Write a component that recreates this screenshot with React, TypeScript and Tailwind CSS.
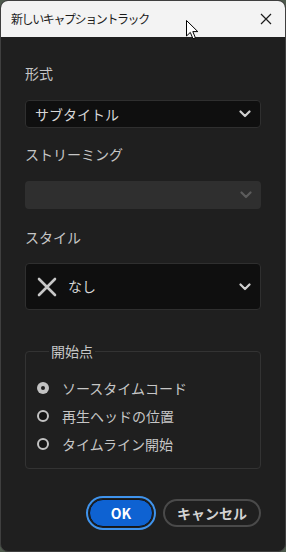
import React from "react";

const font = { fontFamily: '"Noto Sans CJK JP", "Noto Sans", sans-serif' };

export default function App() {
  return (
    <div className="h-[552px] w-[286px] bg-[#4e5a4d]" style={font}>
      <div className="relative flex h-full flex-col overflow-hidden rounded-lg border border-[#3f3f3f] bg-[#1f1f1f]">
        {/* Title bar */}
        <div className="flex h-[36px] shrink-0 items-center justify-between bg-[#f3f3f3] pl-[10px] pr-[13px]">
          <span className="text-[12px] leading-none tracking-[-1.4px] text-[#1b1b1b]">新しいキャプショントラック</span>
          <svg width="12" height="12" viewBox="0 0 12 12" className="text-[#1b1b1b]">
            <path d="M1 1 L11 11 M11 1 L1 11" stroke="currentColor" strokeWidth="1.2" />
          </svg>
        </div>

        {/* Body */}
        <div className="flex flex-col px-[24px]">
          <Label className="mt-[26px]">形式</Label>
          <div className="mt-[17px] flex h-[28px] items-center justify-between rounded-[4px] border border-[#2f2f2f] bg-[#0f0f0f] pl-[9px] pr-[9px]">
            <span className="text-[14px] text-[#d6d6d6]">サブタイトル</span>
            <Chevron color="#d0d0d0" />
          </div>

          <Label className="mt-4">ストリーミング</Label>
          <div className="mt-[17px] flex h-[28px] items-center justify-end rounded-[4px] bg-[#2f2f2f] pr-[9px]">
            <Chevron color="#5c5c5c" />
          </div>

          <Label className="mt-[18px]">スタイル</Label>
          <div className="mt-4 flex h-[47px] items-center justify-between rounded-[4px] border border-[#2f2f2f] bg-[#0f0f0f] pl-[11px] pr-[9px]">
            <div className="flex items-center gap-[11px]">
              <svg width="20" height="20" viewBox="0 0 20 20">
                <path d="M2 2 L18 18 M18 2 L2 18" stroke="#c8c8c8" strokeWidth="2.6" strokeLinecap="round" />
              </svg>
              <span className="text-[14px] text-[#d6d6d6]">なし</span>
            </div>
            <Chevron color="#d0d0d0" />
          </div>

          <fieldset className="mt-[31px] rounded-[4px] border border-[#333333] pb-[10px] pl-[11px]">
            <legend className="ml-[12px] px-[2px] text-[14px] leading-5 text-[#c6c6c6]">開始点</legend>
            <div className="mt-[13px] flex flex-col">
              <Radio checked>ソースタイムコード</Radio>
              <Radio>再生ヘッドの位置</Radio>
              <Radio>タイムライン開始</Radio>
            </div>
          </fieldset>

          <div className="mt-[30px] flex items-center justify-end gap-[10px]">
            <button className="flex h-[28px] w-[64px] items-center justify-center rounded-full border border-[#151515] bg-[#0e62d2] text-[14px] font-bold text-white outline-2 outline-offset-1 outline-[#3f93ec]">
              OK
            </button>
            <button className="flex h-[28px] w-[98px] items-center justify-center rounded-full border-2 border-[#4a4a4a] text-[14px] font-bold text-[#d2d2d2]">
              キャンセル
            </button>
          </div>
        </div>

        {/* Mouse cursor */}
        <svg
          className="absolute left-[185px] top-[19px]"
          width="13"
          height="20"
          viewBox="0 0 13 20"
        >
          <path
            d="M0.5 0.5 L0.5 16 L4.3 12.4 L7 18.8 L9.4 17.8 L6.8 11.6 L11.8 11.6 Z"
            fill="#ffffff"
            stroke="#000000"
            strokeWidth="1"
            strokeLinejoin="round"
          />
        </svg>
      </div>
    </div>
  );
}

function Label({ children, className = "" }: { children: React.ReactNode; className?: string }) {
  return <div className={`text-[14px] leading-5 text-[#c6c6c6] ${className}`}>{children}</div>;
}

function Chevron({ color }: { color: string }) {
  return (
    <svg width="12" height="8" viewBox="0 0 12 8">
      <path d="M1.5 1.5 L6 6 L10.5 1.5" fill="none" stroke={color} strokeWidth="2.2" strokeLinecap="round" strokeLinejoin="round" />
    </svg>
  );
}

function Radio({ checked, children }: { checked?: boolean; children: React.ReactNode }) {
  return (
    <div className="flex h-[28px] items-center gap-[13px]">
      {checked ? (
        <span className="flex h-[12px] w-[12px] items-center justify-center rounded-full bg-[#c2c2c2]">
          <span className="h-[4px] w-[4px] rounded-full bg-[#1f1f1f]" />
        </span>
      ) : (
        <span className="h-[12px] w-[12px] rounded-full border-2 border-[#c2c2c2] bg-[#141414]" />
      )}
      <span className="text-[14px] text-[#c6c6c6]">{children}</span>
    </div>
  );
}
